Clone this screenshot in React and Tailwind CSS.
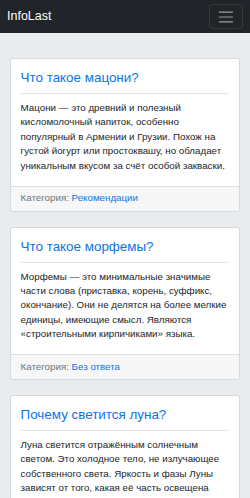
import React from 'react';

const posts = [
  {
    title: 'Что такое мацони?',
    text: 'Мацони — это древний и полезный кисломолочный напиток, особенно популярный в Армении и Грузии. Похож на густой йогурт или простоквашу, но обладает уникальным вкусом за счёт особой закваски.',
    category: 'Рекомендации',
  },
  {
    title: 'Что такое морфемы?',
    text: 'Морфемы — это минимальные значимые части слова (приставка, корень, суффикс, окончание). Они не делятся на более мелкие единицы, имеющие смысл. Являются «строительными кирпичиками» языка.',
    category: 'Без ответа',
  },
  {
    title: 'Почему светится луна?',
    text: 'Луна светится отражённым солнечным светом. Это холодное тело, не излучающее собственного света. Яркость и фазы Луны зависят от того, какая её часть освещена Солнцем и видна с Земли.',
    category: 'Наука',
  },
];

const Navbar = () => (
  <nav className="bg-[#212529] h-[33px] px-[7px] flex items-center justify-between">
    <a href="#" className="text-white text-[12.5px] leading-none">InfoLast</a>
    <button className="w-[34px] h-[25px] border border-white/10 rounded-[4px] flex items-center justify-center">
      <svg width="18" height="18" viewBox="0 0 30 30">
        <path d="M4 7h22M4 15h22M4 23h22" stroke="rgba(255,255,255,0.55)" strokeWidth="2" strokeLinecap="round" />
      </svg>
    </button>
  </nav>
);

const PostCard = ({ post }) => (
  <div className="bg-white border border-black/15 rounded-[3px] overflow-hidden">
    <div className="px-[9.6px] pt-[10px] pb-[12.5px]">
      <a href="#" className="block text-[#0b74e6] text-[13.4px] leading-[17px]">{post.title}</a>
      <hr className="my-[7px] border-0 border-t border-black/10" />
      <p className="text-[#212529] text-[9.75px] leading-[14.4px]">{post.text}</p>
    </div>
    <div className="bg-[#f7f7f7] border-t border-black/10 h-[25px] px-[9.6px] flex items-center text-[9.75px]">
      <span className="text-[#6c757d]">Категория:&nbsp;</span>
      <a href="#" className="text-[#0b74e6]">{post.category}</a>
    </div>
  </div>
);

export default function App() {
  return (
    <div className="min-h-[498px] bg-[#e9ecef] font-['Liberation_Sans',Arial,sans-serif]">
      <Navbar />
      <main className="px-[10px] pt-[25px] pb-[15px] flex flex-col gap-[15px]">
        {posts.map((p) => (
          <PostCard key={p.title} post={p} />
        ))}
      </main>
    </div>
  );
}
